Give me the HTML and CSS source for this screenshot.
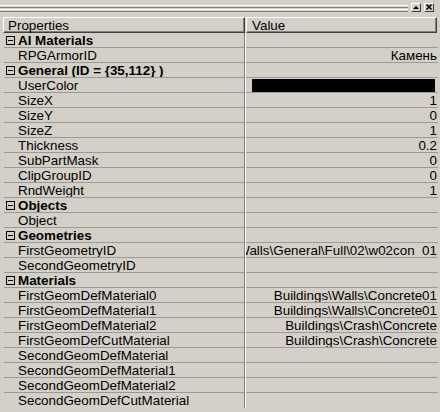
FILE: index.html
```html
<!DOCTYPE html>
<html>
<head>
<meta charset="utf-8">
<link rel="stylesheet" href="styles.css">
</head>
<body>
<div class="panel">
  <div class="titlebar">
    <div class="grip"><div class="gline"></div><div class="gline"></div></div>
    <div class="tbtn"><svg width="8" height="7" viewBox="0 0 8 7"><polygon points="1,5 7,5 4,2" fill="#000"/></svg></div>
    <div class="tbtn"><svg width="8" height="7" viewBox="0 0 8 7"><path d="M1.5 0.5 L6.5 5.5 M6.5 0.5 L1.5 5.5" stroke="#000" stroke-width="1.6"/></svg></div>
  </div>
  <div class="header">
    <div class="hcell hprop">Properties</div>
    <div class="hcell hval">Value</div>
  </div>
  <div class="grid">
    <div class="row cat"><div class="name"><span class="box"></span>AI Materials</div><div class="div"></div><div class="val"></div></div>
    <div class="row"><div class="name">RPGArmorID</div><div class="div"></div><div class="val">Камень</div></div>
    <div class="row cat"><div class="name"><span class="box"></span>General (ID = {35,112} )</div><div class="div"></div><div class="val"></div></div>
    <div class="row"><div class="name">UserColor</div><div class="div"></div><div class="val"><span class="swatch"></span></div></div>
    <div class="row"><div class="name">SizeX</div><div class="div"></div><div class="val">1</div></div>
    <div class="row"><div class="name">SizeY</div><div class="div"></div><div class="val">0</div></div>
    <div class="row"><div class="name">SizeZ</div><div class="div"></div><div class="val">1</div></div>
    <div class="row"><div class="name">Thickness</div><div class="div"></div><div class="val">0.2</div></div>
    <div class="row"><div class="name">SubPartMask</div><div class="div"></div><div class="val">0</div></div>
    <div class="row"><div class="name">ClipGroupID</div><div class="div"></div><div class="val">0</div></div>
    <div class="row"><div class="name">RndWeight</div><div class="div"></div><div class="val">1</div></div>
    <div class="row cat"><div class="name"><span class="box"></span>Objects</div><div class="div"></div><div class="val"></div></div>
    <div class="row"><div class="name">Object</div><div class="div"></div><div class="val"></div></div>
    <div class="row cat"><div class="name"><span class="box"></span>Geometries</div><div class="div"></div><div class="val"></div></div>
    <div class="row"><div class="name">FirstGeometryID</div><div class="div"></div><div class="val">Buildings\Walls\General\Full\02\w02con_01</div></div>
    <div class="row"><div class="name">SecondGeometryID</div><div class="div"></div><div class="val"></div></div>
    <div class="row cat"><div class="name"><span class="box"></span>Materials</div><div class="div"></div><div class="val"></div></div>
    <div class="row"><div class="name">FirstGeomDefMaterial0</div><div class="div"></div><div class="val">Buildings\Walls\Concrete01</div></div>
    <div class="row"><div class="name">FirstGeomDefMaterial1</div><div class="div"></div><div class="val">Buildings\Walls\Concrete01</div></div>
    <div class="row"><div class="name">FirstGeomDefMaterial2</div><div class="div"></div><div class="val">Buildings\Crash\Concrete</div></div>
    <div class="row"><div class="name">FirstGeomDefCutMaterial</div><div class="div"></div><div class="val">Buildings\Crash\Concrete</div></div>
    <div class="row"><div class="name">SecondGeomDefMaterial</div><div class="div"></div><div class="val"></div></div>
    <div class="row"><div class="name">SecondGeomDefMaterial1</div><div class="div"></div><div class="val"></div></div>
    <div class="row"><div class="name">SecondGeomDefMaterial2</div><div class="div"></div><div class="val"></div></div>
    <div class="row last"><div class="name">SecondGeomDefCutMaterial</div><div class="div"></div><div class="val"></div></div>
  </div>
</div>
</body>
</html>
```
FILE: styles.css
```css
html, body {
  margin: 0;
  padding: 0;
  background: #d4d0c8;
}
body {
  width: 440px;
  height: 412px;
  overflow: hidden;
  font-family: "Liberation Sans", Arial, sans-serif;
  font-size: 13.4px;
  color: #000;
}
.panel {
  padding: 0 2px 0 4px;
}
.titlebar {
  height: 17px;
  display: flex;
  align-items: flex-start;
  margin-left: -4px;
}
.grip {
  width: 408px;
  padding-top: 5px;
  display: flex;
  flex-direction: column;
  gap: 1px;
}
.gline {
  height: 1px;
  border-top: 1px solid #fff;
  border-bottom: 1px solid #808080;
}
.tbtn {
  width: 8px;
  height: 7px;
  margin-top: 3px;
  margin-left: 3px;
  border-top: 1px solid #fff;
  border-left: 1px solid #fff;
  border-right: 1px solid #404040;
  border-bottom: 1px solid #404040;
  display: flex;
  align-items: center;
  justify-content: center;
}
.tbtn svg { display: block; }
.header {
  display: flex;
  gap: 1px;
  margin-left: -1px;
  height: 16px;
}
.hcell {
  box-sizing: border-box;
  height: 16px;
  border-top: 1px solid #fff;
  border-left: 1px solid #fff;
  border-right: 1px solid #404040;
  border-bottom: 1px solid #404040;
  box-shadow: inset -1px -1px 0 #808080;
  line-height: 15px;
  padding-left: 4px;
  white-space: nowrap;
}
.hprop { width: 242px; }
.hval { width: 191px; padding-left: 5px; }
.grid {
  display: flex;
  flex-direction: column;
}
.row {
  display: grid;
  grid-template-columns: 240px 2px 192px;
  height: 15px;
}
.name, .val {
  box-sizing: border-box;
  height: 15px;
  border-bottom: 1px solid #9a9a9a;
  padding-top: 2px;
  line-height: 12px;
  white-space: nowrap;
  overflow: hidden;
}
.name {
  padding-left: 14px;
  display: flex;
  align-items: flex-start;
}
.val {
  display: flex;
  justify-content: flex-end;
  padding-right: 1px;
}
.div {
  border-left: 1px solid #808080;
  border-right: 1px solid #fff;
}
.cat .name {
  font-weight: bold;
  padding-left: 2px;
  padding-top: 1px;
  line-height: 13px;
}
.box {
  box-sizing: border-box;
  width: 9px;
  height: 9px;
  border: 1px solid #000;
  margin-top: 2px;
  margin-right: 3px;
  position: relative;
  flex: none;
}
.box::after {
  content: "";
  position: absolute;
  left: 1px;
  right: 1px;
  top: 3px;
  height: 1px;
  background: #000;
}
.swatch {
  display: block;
  width: 183px;
  height: 13px;
  background: #000;
  margin-top: -1px;
  margin-right: 2px;
}
.last .name, .last .val { border-bottom-color: transparent; }
```
